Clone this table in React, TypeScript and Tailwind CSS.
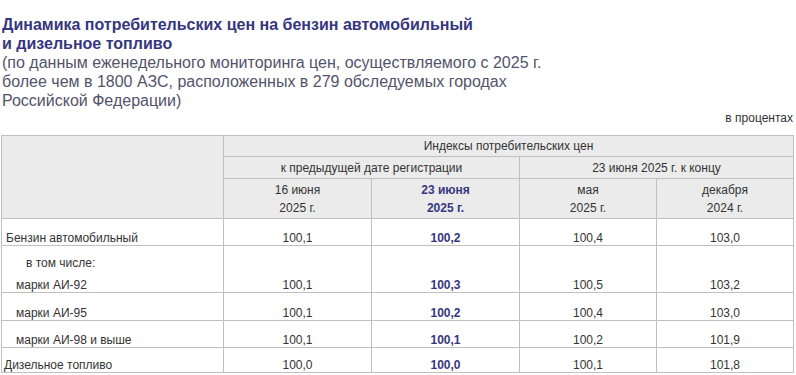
import React from "react";

const F = { fontFamily: '"Liberation Sans", Arial, sans-serif' };

type Row = {
  label: React.ReactNode;
  vals: [string, string, string, string];
  h: string;
};

export default function App() {
  const rows: Row[] = [
    { label: <div className="pl-[4px]">Бензин автомобильный</div>, vals: ["100,1", "100,2", "100,4", "103,0"], h: "h-[27px]" },
    {
      label: (
        <div>
          <div className="pl-[24px] mb-[8px]">в том числе:</div>
          <div className="pl-[14px]">марки АИ-92</div>
        </div>
      ),
      vals: ["100,1", "100,3", "100,5", "103,2"],
      h: "h-[47px]",
    },
    { label: <div className="pl-[14px]">марки АИ-95</div>, vals: ["100,1", "100,2", "100,4", "103,0"], h: "h-[28px]" },
    { label: <div className="pl-[14px]">марки АИ-98 и выше</div>, vals: ["100,1", "100,1", "100,2", "101,9"], h: "h-[27px]" },
    { label: <div className="pl-[2px]">Дизельное топливо</div>, vals: ["100,0", "100,0", "100,1", "101,8"], h: "h-[25px]" },
  ];

  return (
    <div className="w-[796px] h-[375px] overflow-hidden bg-white pl-[1px]" style={F}>
      <div className="pt-[15px] text-[16px] leading-[19px] pl-[1px]">
        <div className="font-bold text-[#363680]">
          Динамика потребительских цен на бензин автомобильный
          <br />и дизельное топливо
        </div>
        <div className="text-[#53536b]">
          (по данным еженедельного мониторинга цен, осуществляемого с 2025 г.
          <br />
          более чем в 1800 АЗС, расположенных в 279 обследуемых городах
          <br />
          Российской Федерации)
        </div>
      </div>
      <div className="w-[792px] text-right text-[12px] leading-[14px] text-[#333] mt-[1px]">в процентах</div>
      <table className="mt-[10px] w-[792px] table-fixed border-collapse text-[12px] text-[#333]">
        <colgroup>
          <col className="w-[222px]" />
          <col className="w-[148px]" />
          <col className="w-[148px]" />
          <col className="w-[137px]" />
          <col className="w-[137px]" />
        </colgroup>
        <thead className="bg-[#ebebeb] leading-[18px] text-center">
          <tr>
            <th rowSpan={3} className="border border-[#c0c0c0] font-normal"></th>
            <th colSpan={4} className="border border-[#c0c0c0] font-normal h-[21px] align-middle">
              Индексы потребительских цен
            </th>
          </tr>
          <tr>
            <th colSpan={2} className="border border-[#c0c0c0] font-normal h-[22px] align-middle">
              к предыдущей дате регистрации
            </th>
            <th colSpan={2} className="border border-[#c0c0c0] font-normal h-[22px] align-middle">
              23 июня 2025 г. к концу
            </th>
          </tr>
          <tr>
            <th className="border border-[#c0c0c0] font-normal h-[40px] align-middle">
              16 июня
              <br />
              2025 г.
            </th>
            <th className="border border-[#c0c0c0] font-bold text-[#363680] h-[40px] align-middle">
              23 июня
              <br />
              2025 г.
            </th>
            <th className="border border-[#c0c0c0] font-normal h-[40px] align-middle">
              мая
              <br />
              2025 г.
            </th>
            <th className="border border-[#c0c0c0] font-normal h-[40px] align-middle">
              декабря
              <br />
              2024 г.
            </th>
          </tr>
        </thead>
        <tbody className="leading-[14px]">
          {rows.map((r, i) => (
            <tr key={i}>
              <td className={`border border-[#c0c0c0] align-bottom p-0 ${r.h}`}>{r.label}</td>
              <td className="border border-[#c0c0c0] align-bottom text-center p-0">{r.vals[0]}</td>
              <td className="border border-[#c0c0c0] align-bottom text-center p-0 font-bold text-[#363680]">{r.vals[1]}</td>
              <td className="border border-[#c0c0c0] align-bottom text-center p-0">{r.vals[2]}</td>
              <td className="border border-[#c0c0c0] align-bottom text-center p-0">{r.vals[3]}</td>
            </tr>
          ))}
        </tbody>
      </table>
    </div>
  );
}
